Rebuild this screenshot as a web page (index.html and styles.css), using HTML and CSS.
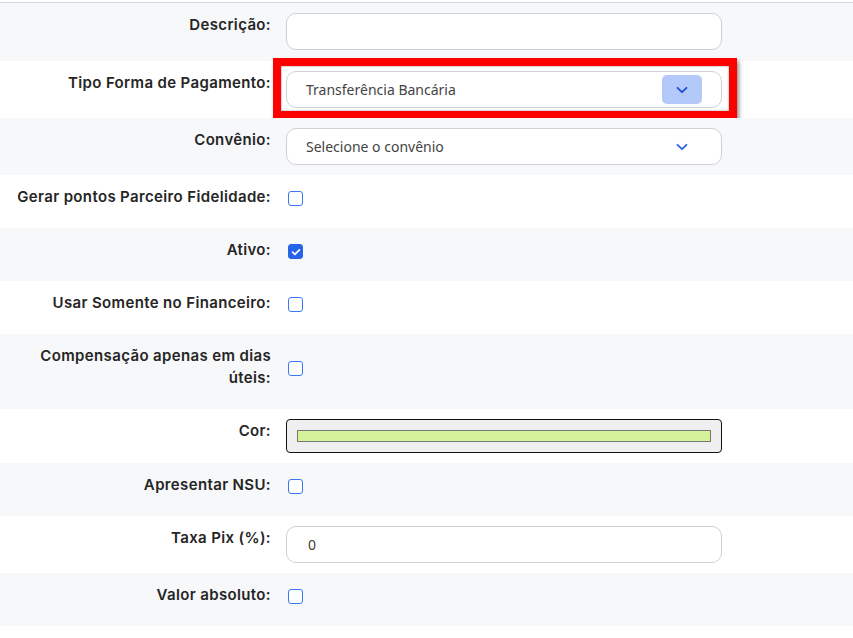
FILE: index.html
```html
<!DOCTYPE html>
<html lang="pt-BR">
<head>
<meta charset="utf-8">
<title>Forma de Pagamento</title>
<link rel="stylesheet" href="styles.css">
</head>
<body>
<div class="page">
  <form class="form">
    <div class="row alt input-row first">
      <label class="lbl">Descrição:</label>
      <div class="ctl"><div class="field"></div></div>
    </div>
    <div class="row input-row">
      <label class="lbl">Tipo Forma de Pagamento:</label>
      <div class="ctl">
        <div class="field select">
          <span class="val">Transferência Bancária</span>
          <span class="drop active">
            <svg width="12" height="8" viewBox="0 0 12 8"><path d="M1.5 1.8 6 6.2 10.5 1.8" fill="none" stroke="#1d4ed8" stroke-width="1.8" stroke-linecap="round" stroke-linejoin="round"/></svg>
          </span>
        </div>
      </div>
      <div class="highlight"></div>
    </div>
    <div class="row alt input-row">
      <label class="lbl">Convênio:</label>
      <div class="ctl">
        <div class="field select">
          <span class="val">Selecione o convênio</span>
          <span class="drop">
            <svg width="12" height="8" viewBox="0 0 12 8"><path d="M1.5 1.8 6 6.2 10.5 1.8" fill="none" stroke="#2f64e0" stroke-width="1.8" stroke-linecap="round" stroke-linejoin="round"/></svg>
          </span>
        </div>
      </div>
    </div>
    <div class="row check-row">
      <label class="lbl">Gerar pontos Parceiro Fidelidade:</label>
      <div class="ctl"><span class="cb"></span></div>
    </div>
    <div class="row alt check-row">
      <label class="lbl">Ativo:</label>
      <div class="ctl"><span class="cb checked"><svg width="10" height="8" viewBox="0 0 10 8"><path d="M1.6 4.2 3.9 6.3 8.4 1.8" fill="none" stroke="#fff" stroke-width="1.7" stroke-linecap="round" stroke-linejoin="round"/></svg></span></div>
    </div>
    <div class="row check-row">
      <label class="lbl">Usar Somente no Financeiro:</label>
      <div class="ctl"><span class="cb"></span></div>
    </div>
    <div class="row alt check-row">
      <label class="lbl">Compensação apenas em dias úteis:</label>
      <div class="ctl"><span class="cb"></span></div>
    </div>
    <div class="row input-row">
      <label class="lbl">Cor:</label>
      <div class="ctl"><div class="color"><span class="swatch"></span></div></div>
    </div>
    <div class="row alt check-row">
      <label class="lbl">Apresentar NSU:</label>
      <div class="ctl"><span class="cb"></span></div>
    </div>
    <div class="row input-row">
      <label class="lbl">Taxa Pix (%):</label>
      <div class="ctl"><div class="field"><span class="num">0</span></div></div>
    </div>
    <div class="row alt check-row">
      <label class="lbl">Valor absoluto:</label>
      <div class="ctl"><span class="cb"></span></div>
    </div>
  </form>
</div>
</body>
</html>
```
FILE: styles.css
```css
* { box-sizing: border-box; }
html, body { margin: 0; padding: 0; background: #ffffff; }
.page {
  padding-top: 2px;
}
.form {
  border-top: 1px solid #d4d6da;
  display: flex;
  flex-direction: column;
}
.row {
  position: relative;
  display: grid;
  grid-template-columns: 271px 436px;
  column-gap: 15px;
  background: #ffffff;
}
.row.alt { background: #f7f8fa; }
.input-row { padding: 10px 0; }
.input-row.first { padding-bottom: 11px; }
.check-row { padding: 10px 0 20px; align-items: center; }
.lbl {
  font-family: Inter, "Noto Sans", sans-serif;
  font-weight: 600;
  font-size: 15px;
  letter-spacing: 0.36px;
  line-height: 22px;
  color: #252525;
  text-align: right;
  padding-top: 1px;
  align-self: start;
}
.check-row .lbl { align-self: center; }
.ctl { display: flex; align-items: center; }
.field {
  width: 436px;
  height: 37px;
  border: 1px solid #cfd1d6;
  border-radius: 10px;
  background: #fff;
  display: flex;
  align-items: center;
  padding: 0 19px 0 19px;
  font-family: "Noto Sans", "Open Sans", sans-serif;
  font-size: 14px;
  color: #444444;
}
.select { justify-content: space-between; padding-right: 19px; }
.drop {
  width: 40px;
  height: 29px;
  border-radius: 5px;
  display: flex;
  align-items: center;
  justify-content: center;
}
.drop.active { background: #b3c9fa; }
.num { color: #4a3c30; padding-left: 2px; }
.cb {
  width: 15px;
  height: 15px;
  margin: 4px 0 0 2px;
  border: 1.5px solid #3a78f2;
  border-radius: 3px;
  background: #fff;
  display: flex;
  align-items: center;
  justify-content: center;
}
.cb.checked { background: #2563eb; border-color: #2563eb; }
.color {
  width: 437px;
  height: 34px;
  border: 1px solid #111;
  border-radius: 4px;
  background: #efefef;
  padding: 10px 10px;
  display: flex;
}
.swatch {
  flex: 1;
  height: 12px;
  background: #d6f29a;
  border: 1px solid #777;
}
.highlight {
  position: absolute;
  left: 273px;
  top: -3px;
  width: 464px;
  height: 61px;
  border: 8px solid #ff0000;
  box-shadow: 2px 3px 4px rgba(0,0,0,0.45), inset 0 0 2px rgba(0,0,0,0.55);
  pointer-events: none;
}
```
